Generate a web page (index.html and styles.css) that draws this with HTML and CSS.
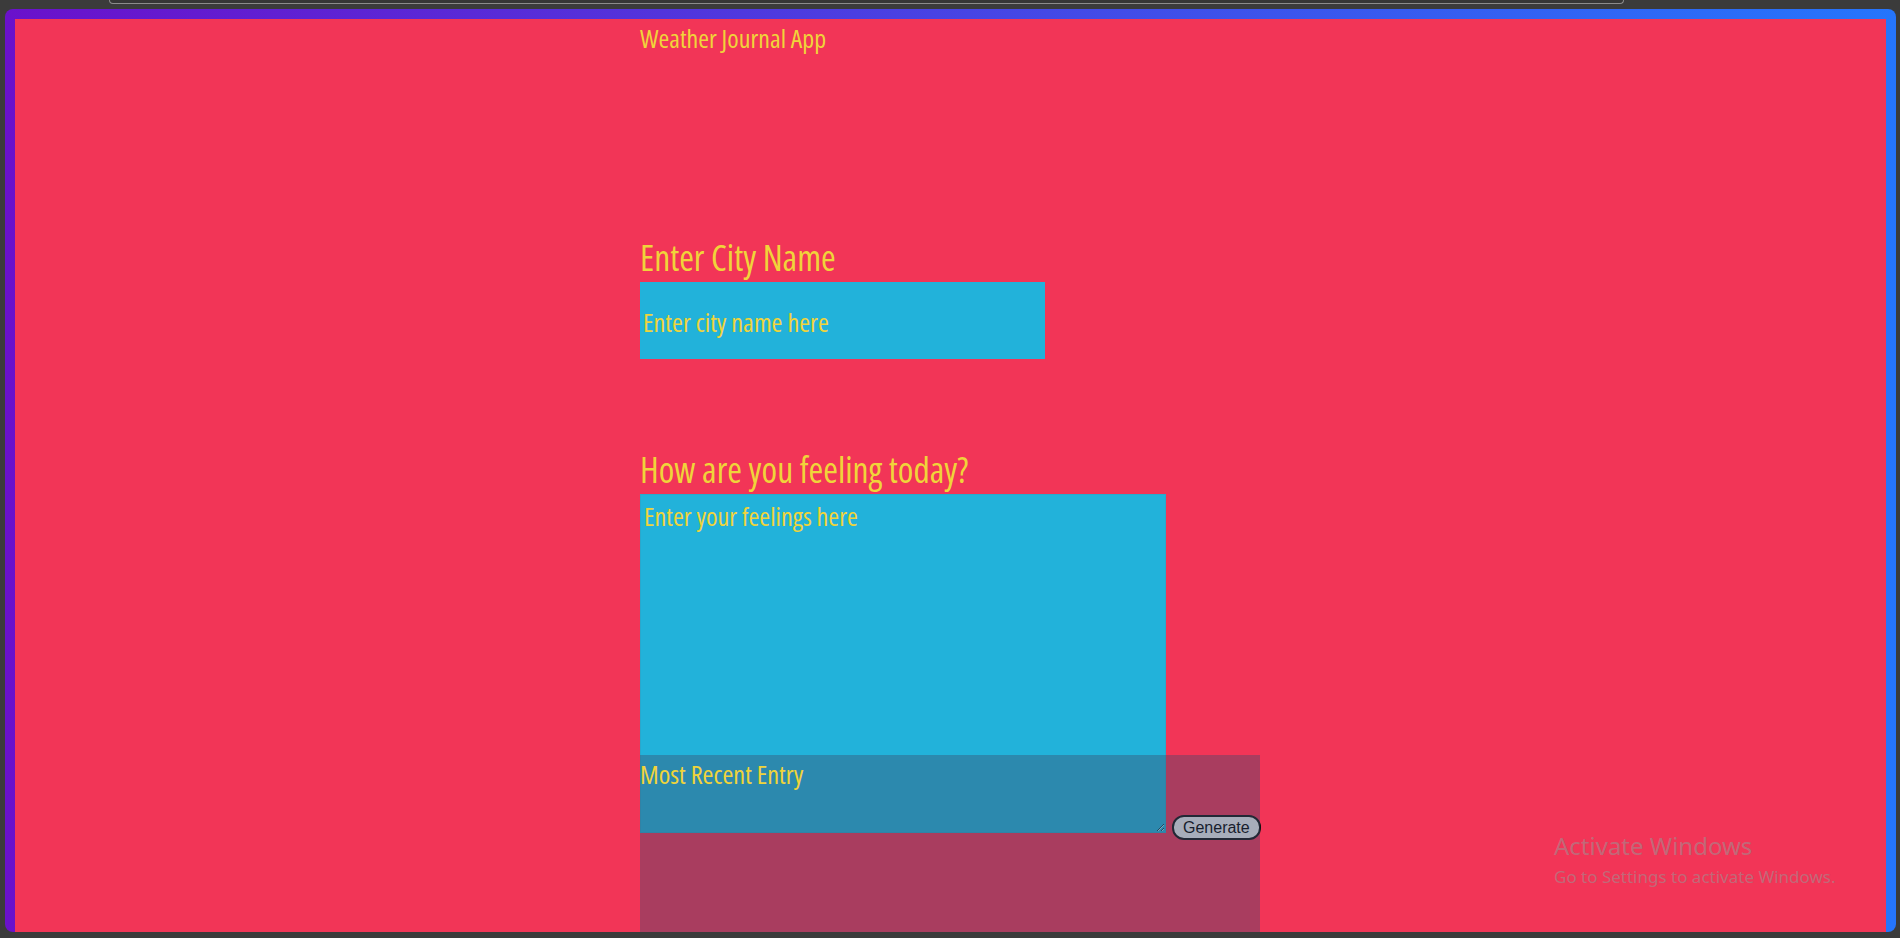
FILE: index.html
```html
<!DOCTYPE html>
<html lang="en">
<head>
<meta charset="utf-8">
<title>Weather Journal App</title>
<link rel="stylesheet" href="styles.css">
</head>
<body>
  <div class="topbar"><div class="topbar-field"></div></div>
  <div class="window">
    <div class="app">
      <div class="headline">Weather Journal App</div>
      <div class="zip">
        <label class="label" for="city">Enter City Name</label>
        <input class="city-input" type="text" id="city" placeholder="Enter city name here">
      </div>
      <div class="feel">
        <label class="label" for="feelings">How are you feeling today?</label>
        <div class="feel-row">
          <textarea class="feel-input" id="feelings" placeholder="Enter your feelings here" autofocus></textarea>
          <button class="generate" id="generate" type="submit">Generate</button>
        </div>
      </div>
      <div class="entry">
        <div class="entry-title">Most Recent Entry</div>
        <div class="entry-holder"></div>
      </div>
    </div>
  </div>
  <div class="watermark">
    <div class="wm-title">Activate Windows</div>
    <div class="wm-sub">Go to Settings to activate Windows.</div>
  </div>
</body>
</html>
```

FILE: styles.css
```css
* {
  box-sizing: border-box;
}

html, body {
  margin: 0;
  padding: 0;
}

body {
  width: 1900px;
  height: 938px;
  overflow: hidden;
  background: #3b3b3b;
  position: relative;
  font-family: "Liberation Sans", Arial, sans-serif;
}

.topbar {
  height: 9px;
  overflow: hidden;
}

.topbar-field {
  margin-left: 109px;
  width: 1515px;
  height: 4px;
  border: 1px solid #8c8c8c;
  border-top: 0;
  border-radius: 0 0 8px 8px;
  background: #363636;
}

.window {
  margin: 0 4px 0 5px;
  height: 923px;
  padding: 10px 10px 0;
  border-radius: 8px;
  overflow: hidden;
  background: linear-gradient(90deg, #6a11cb, #2575fc);
}

.app {
  height: 100%;
  overflow: hidden;
  background: #f23557;
  color: #f0d43a;
  font-family: "Open Sans", "Roboto", sans-serif;
  font-stretch: 75%;
  font-weight: 500;
  display: grid;
  grid-template-columns: 625px 620px 1fr;
  grid-template-rows: 210px 200px 326px 1fr;
}

.headline {
  grid-column: 2;
  grid-row: 1;
  font-size: 26px;
  line-height: 30px;
  padding-top: 4px;
}

.zip {
  grid-column: 2;
  grid-row: 2;
  padding-top: 7px;
}

.feel {
  grid-column: 2;
  grid-row: 3;
  padding-top: 19px;
}

.label {
  display: block;
  font-size: 35.5px;
  line-height: 42px;
  margin-bottom: 4px;
}

.city-input {
  display: block;
  width: 405px;
  height: 77px;
  margin: 0;
  padding: 2px 3px 0;
  border: 0;
  outline: none;
  background: #22b2da;
  color: #f0d43a;
  font-family: inherit;
  font-stretch: 75%;
  font-weight: 500;
  font-size: 26.3px;
}

.city-input::placeholder,
.feel-input::placeholder {
  color: #f0d43a;
  opacity: 1;
}

.feel-row {
  display: flex;
  align-items: flex-end;
  gap: 6px;
}

.feel-input {
  display: block;
  flex-shrink: 0;
  width: 526px;
  height: 339px;
  margin: 0;
  padding: 2px 3px;
  border: 1px solid #2aa7cc;
  outline: none;
  background: #22b2da;
  color: #f0d43a;
  caret-color: #f0d43a;
  font-family: inherit;
  font-stretch: 75%;
  font-weight: 500;
  font-size: 26.2px;
  line-height: 38px;
}

.generate {
  flex-shrink: 0;
  margin: 0 0 -7px;
  padding: 0 9px;
  height: 25px;
  border: 2px solid #111;
  border-radius: 12px;
  background: #efefef;
  color: #000;
  font-family: "Liberation Sans", Arial, sans-serif;
  font-stretch: normal;
  font-weight: 400;
  font-size: 16px;
  line-height: 18px;
}

.entry {
  grid-column: 2;
  grid-row: 4;
  background: rgba(59, 74, 107, 0.4);
  padding-top: 1px;
}

.entry-title {
  font-size: 26.3px;
  line-height: 36px;
}

.watermark {
  position: absolute;
  left: 1554px;
  top: 830px;
  color: rgba(150, 150, 150, 0.55);
  font-family: "Noto Sans", "Open Sans", sans-serif;
}

.wm-title {
  font-size: 24px;
  line-height: 32px;
}

.wm-sub {
  margin-top: 3px;
  font-size: 17px;
  line-height: 24px;
}
```
